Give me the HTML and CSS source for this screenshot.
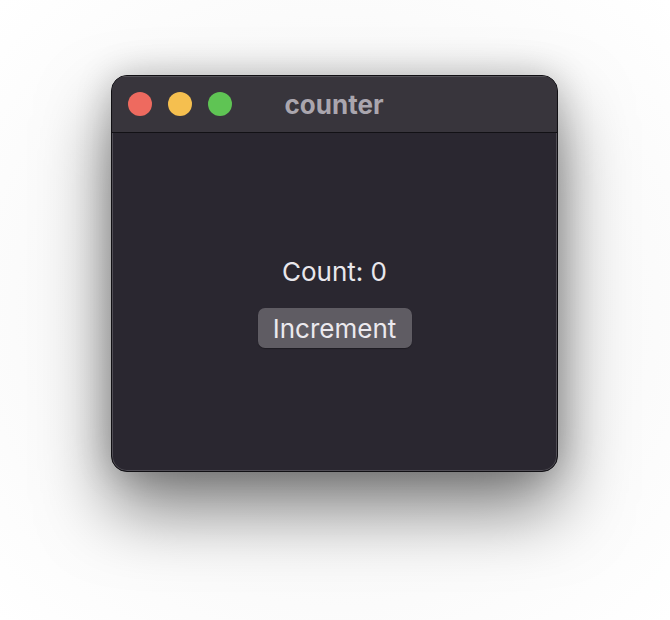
FILE: index.html
```html
<!DOCTYPE html>
<html>
<head>
<meta charset="utf-8">
<link rel="stylesheet" href="styles.css">
</head>
<body>
<div class="stage">
  <div class="window">
    <div class="titlebar">
      <div class="lights">
        <span class="light red"></span>
        <span class="light yellow"></span>
        <span class="light green"></span>
      </div>
      <div class="title">counter</div>
    </div>
    <div class="content">
      <div class="count">Count: 0</div>
      <button class="btn">Increment</button>
    </div>
  </div>
</div>
</body>
</html>
```
FILE: styles.css
```css
html, body {
  margin: 0;
  padding: 0;
  background: #ffffff;
}
.stage {
  width: 670px;
  height: 620px;
  padding: 75px 0 0 111px;
  box-sizing: border-box;
  background: radial-gradient(ellipse at center, #f2f2f2 0%, #fafafa 60%, #ffffff 100%);
}
.window {
  width: 447px;
  height: 397px;
  box-sizing: border-box;
  border-radius: 16px;
  border: 1px solid #111014;
  background: #2a2730;
  box-shadow: inset 0 0 0 1px rgba(255,255,255,0.18), 0 36px 70px rgba(0,0,0,0.5), 0 0 36px rgba(0,0,0,0.2);
  overflow: hidden;
  display: flex;
  flex-direction: column;
  font-family: Inter, "Liberation Sans", sans-serif;
}
.titlebar {
  height: 56px;
  flex: none;
  background: #38353c;
  border-bottom: 1px solid #121115;
  position: relative;
  display: flex;
  align-items: center;
  box-shadow: inset 0 1px 0 rgba(255,255,255,0.15);
}
.lights {
  display: flex;
  gap: 16px;
  padding-left: 16px;
}
.light {
  width: 24px;
  height: 24px;
  border-radius: 50%;
  display: block;
}
.red { background: #ee6a5f; }
.yellow { background: #f5bf4f; }
.green { background: #5fc454; }
.title {
  position: absolute;
  left: 0;
  right: 0;
  top: 0;
  bottom: 0;
  display: flex;
  align-items: center;
  justify-content: center;
  font-weight: 700;
  font-size: 26px;
  color: #aaa6ae;
  padding-top: 0;
  padding-right: 1px;
}
.content {
  flex: 1;
  display: flex;
  flex-direction: column;
  align-items: center;
  justify-content: center;
  gap: 20px;
}
.count {
  color: #e9e7ec;
  font-size: 26px;
  line-height: 32px;
}
.btn {
  font-family: inherit;
  font-size: 26px;
  color: #ebe9ee;
  background: #5f5c63;
  border: none;
  border-radius: 7px;
  width: 154px;
  height: 40px;
  padding: 0;
  box-shadow: 0 1px 1px rgba(0,0,0,0.3);
}
```
